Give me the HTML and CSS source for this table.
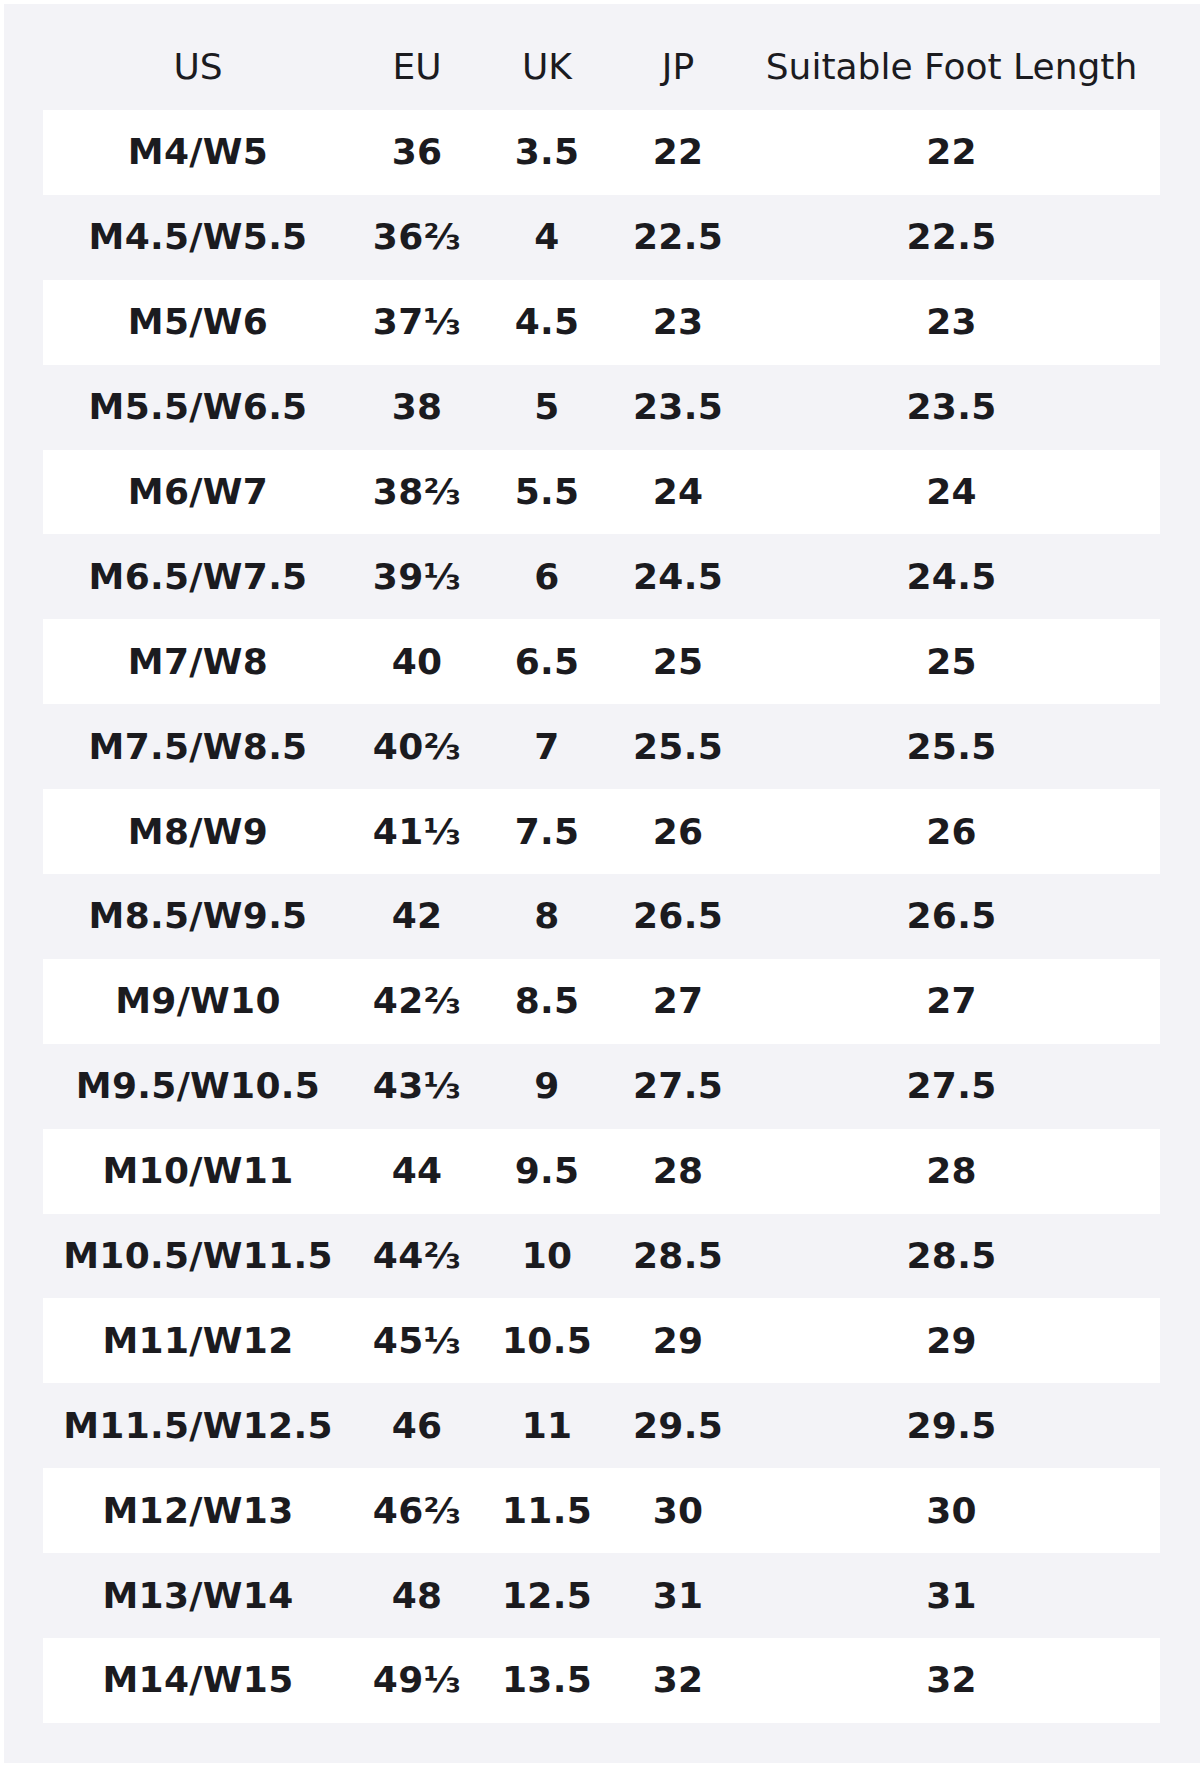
FILE: index.html
```html
<!DOCTYPE html>
<html lang="en">
<head>
<meta charset="utf-8">
<title>Size Chart</title>
<link rel="stylesheet" href="styles.css">
</head>
<body>
<div class="panel">
  <div class="row head">
    <div>US</div><div>EU</div><div>UK</div><div>JP</div><div>Suitable Foot Length</div>
  </div>
  <div class="row odd"><div>M4/W5</div><div>36</div><div>3.5</div><div>22</div><div>22</div></div>
  <div class="row"><div>M4.5/W5.5</div><div>36⅔</div><div>4</div><div>22.5</div><div>22.5</div></div>
  <div class="row odd"><div>M5/W6</div><div>37⅓</div><div>4.5</div><div>23</div><div>23</div></div>
  <div class="row"><div>M5.5/W6.5</div><div>38</div><div>5</div><div>23.5</div><div>23.5</div></div>
  <div class="row odd"><div>M6/W7</div><div>38⅔</div><div>5.5</div><div>24</div><div>24</div></div>
  <div class="row"><div>M6.5/W7.5</div><div>39⅓</div><div>6</div><div>24.5</div><div>24.5</div></div>
  <div class="row odd"><div>M7/W8</div><div>40</div><div>6.5</div><div>25</div><div>25</div></div>
  <div class="row"><div>M7.5/W8.5</div><div>40⅔</div><div>7</div><div>25.5</div><div>25.5</div></div>
  <div class="row odd"><div>M8/W9</div><div>41⅓</div><div>7.5</div><div>26</div><div>26</div></div>
  <div class="row"><div>M8.5/W9.5</div><div>42</div><div>8</div><div>26.5</div><div>26.5</div></div>
  <div class="row odd"><div>M9/W10</div><div>42⅔</div><div>8.5</div><div>27</div><div>27</div></div>
  <div class="row"><div>M9.5/W10.5</div><div>43⅓</div><div>9</div><div>27.5</div><div>27.5</div></div>
  <div class="row odd"><div>M10/W11</div><div>44</div><div>9.5</div><div>28</div><div>28</div></div>
  <div class="row"><div>M10.5/W11.5</div><div>44⅔</div><div>10</div><div>28.5</div><div>28.5</div></div>
  <div class="row odd"><div>M11/W12</div><div>45⅓</div><div>10.5</div><div>29</div><div>29</div></div>
  <div class="row"><div>M11.5/W12.5</div><div>46</div><div>11</div><div>29.5</div><div>29.5</div></div>
  <div class="row odd"><div>M12/W13</div><div>46⅔</div><div>11.5</div><div>30</div><div>30</div></div>
  <div class="row"><div>M13/W14</div><div>48</div><div>12.5</div><div>31</div><div>31</div></div>
  <div class="row odd"><div>M14/W15</div><div>49⅓</div><div>13.5</div><div>32</div><div>32</div></div>
</div>
</body>
</html>
```

FILE: styles.css
```css
html, body {
  margin: 0;
  padding: 0;
  background: #ffffff;
}
body {
  font-family: "DejaVu Sans", sans-serif;
  color: #1b1b1f;
}
.panel {
  margin: 4px 3px 5px 4px;
  width: 1196px;
  height: 1759px;
  box-sizing: border-box;
  background: #f3f3f7;
  padding: 0 40px 40px 39px;
}
.row {
  display: grid;
  grid-template-columns: 310px 128px 132px 130px 1fr;
  height: 84.9px;
  align-items: center;
  font-size: 36px;
  font-weight: bold;
  line-height: 42px;
  letter-spacing: 0.3px;
}
.row > div {
  text-align: center;
  white-space: nowrap;
}
.row.odd {
  background: #ffffff;
}
.row.head {
  height: 106px;
  box-sizing: border-box;
  padding-top: 42px;
  align-items: start;
  font-weight: normal;
  letter-spacing: 0;
}
```
